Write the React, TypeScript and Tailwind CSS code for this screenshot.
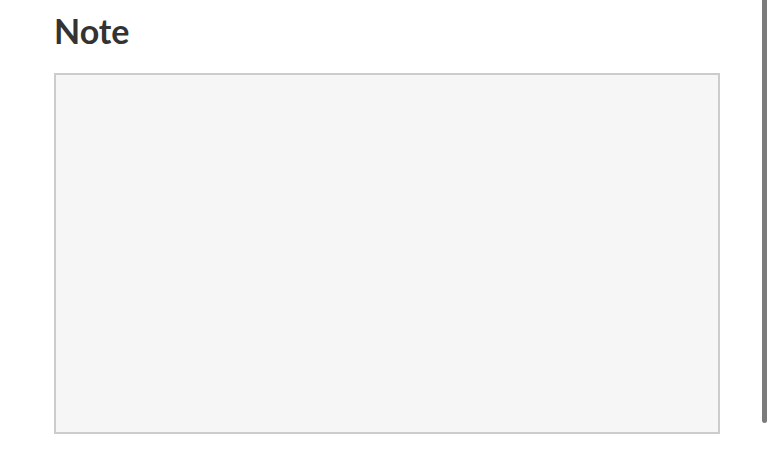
export default function App() {
  return (
    <div className="relative h-[455px] w-[773px] overflow-hidden bg-white font-['Lato',sans-serif]">
      <div className="pl-[54px] pt-[11px]">
        <h2 className="text-[34px] font-bold leading-[40px] text-[#333333]">Note</h2>
        <div className="mt-[22px] h-[361px] w-[666px] border-2 border-[#cccccc] bg-[#f6f6f6]" />
      </div>
      <div className="absolute right-[6px] top-0 h-[423px] w-[5px] rounded-b-sm bg-[#7b7b7b]" />
    </div>
  );
}
